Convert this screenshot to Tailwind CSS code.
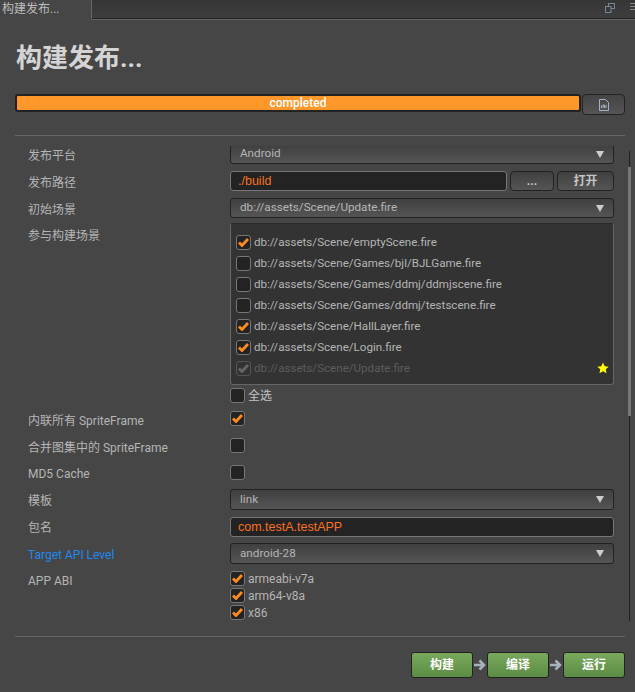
<!DOCTYPE html>
<html lang="zh">
<head>
    <meta charset="UTF-8">
    <title>构建发布...</title>
    <script src="https://cdn.jsdelivr.net/npm/@tailwindcss/browser@4"></script>
</head>
<body class="bg-[#464646] overflow-hidden font-['Roboto','Noto_Sans_CJK_SC',sans-serif] text-[12px] text-[#b5b5b5]">
    <div class="w-[635px] h-[692px] flex flex-col">
        <!-- Tab bar -->
        <div class="h-[19px] flex bg-[#3a3a3a]">
            <div class="w-[92px] h-[19px] pl-[2px] bg-[#464646] text-[12px] leading-[19px] text-[#bdbdbd] border-r border-[#666]">构建发布...</div>
            <div class="flex-1 flex justify-end items-start bg-gradient-to-b from-[#353535] to-[#3e3e3e] border-b border-[#222] relative">
                <div class="absolute left-0 right-0 bottom-[-2px] h-px bg-[#666]"></div>
                <svg class="w-[10px] h-[10px] mt-[3px] mr-[15px] text-[#76879b]" viewBox="0 0 10 10" fill="none" stroke="currentColor"><rect x="3.500" y="0.500" width="6" height="5"/><rect x="0.500" y="3.500" width="5.500" height="6" fill="#3a3a3a"/></svg>
                <svg class="w-[5px] h-[8px] mt-[3px] text-[#888]" viewBox="0 0 5 8" stroke="currentColor"><path d="M0 .5h5M0 3.500h5M0 6.500h5"/></svg>
            </div>
        </div>

        <!-- Header -->
        <div class="pl-[15px] pr-[10px] pt-[22px]">
            <h1 class="h-[34px] pl-[1px] text-[26px] leading-[34px] font-bold text-[#d4d4d4]">构建发布...</h1>
            <div class="mt-[19px] flex h-[21px] gap-[1px]">
                <div class="w-[566px] h-[18px] rounded-[3px] border-2 border-[#222] bg-[#ff972a] text-center text-[12px] leading-[14px] font-medium text-white">completed</div>
                <button class="w-[43px] h-[21px] rounded-[4px] border border-[#222] bg-gradient-to-b from-[#444] to-[#555] flex items-center justify-center">
                    <svg class="w-[10px] h-[12px] text-[#a3b2c9]" viewBox="0 0 10 12" fill="none" stroke="currentColor"><path d="M.5.5h6l3 3v8h-9zM2.500 9V6.500M4 9V6h1.500v3M7 6v3"/></svg>
                </button>
            </div>
            <div class="mt-[20px] h-px bg-[#666]"></div>
        </div>

        <!-- Form -->
        <div class="mt-[10px] h-[480px] relative overflow-hidden">
            <div class="absolute left-[629px] top-[5px] h-[470px] w-px bg-[#222]"></div>
            <div class="absolute left-[628px] top-[21px] h-[249px] w-[3px] bg-[#777]"></div>
            <div class="pl-[28px] -mt-[2px] flex flex-col">
                <div class="flex h-[27px]">
                    <label class="w-[202px] leading-[24px]">发布平台</label>
                    <div class="w-[384px] h-[20px] pl-[9px] pr-[9px] flex justify-between items-center rounded-[3px] border border-[#222] bg-gradient-to-b from-[#404040] to-[#555] text-[11.700px]">
                        <span>Android</span><span class="w-0 h-0 border-x-[4.500px] border-x-transparent border-t-[7px] border-t-[#ccc]"></span>
                    </div>
                </div>
                <div class="flex h-[27px]">
                    <label class="w-[202px] leading-[24px]">发布路径</label>
                    <input class="w-[277px] h-[20px] px-[7px] rounded-[3px] border border-[#777] bg-[#232323] font-['Liberation_Sans',sans-serif] text-[12.500px] text-[#f9701f]" value="./build">
                    <button class="ml-[3px] w-[44px] h-[20px] rounded-[4px] border border-[#222] bg-gradient-to-b from-[#404040] to-[#555] font-bold leading-[14px] text-[#c4c4c4]">...</button>
                    <button class="ml-[3px] w-[57px] h-[20px] rounded-[4px] border border-[#222] bg-gradient-to-b from-[#404040] to-[#555] font-bold leading-[16px] text-[#c4c4c4]">打开</button>
                </div>
                <div class="flex h-[25px]">
                    <label class="w-[202px] leading-[24px]">初始场景</label>
                    <div class="w-[384px] h-[20px] pl-[9px] pr-[9px] flex justify-between items-center rounded-[3px] border border-[#222] bg-gradient-to-b from-[#404040] to-[#555] text-[11.700px]">
                        <span>db://assets/Scene/Update.fire</span><span class="w-0 h-0 border-x-[4.500px] border-x-transparent border-t-[7px] border-t-[#ccc]"></span>
                    </div>
                </div>
                <div class="flex h-[165px]">
                    <label class="w-[202px] leading-[26px]">参与构建场景</label>
                    <div class="w-[384px] h-[162px] pt-[8px] pl-[5px] pr-[5px] rounded-[3px] border border-[#666] border-t-[#2a2a2a] bg-[#333] relative text-[11.600px]">
                        <div class="flex items-center gap-[3px] h-[21px]">
                            <span class="w-[15px] h-[15px] rounded-[3px] border border-[#777] bg-[#232323] flex items-center justify-center"><svg class="w-[11px] h-[9px]" viewBox="0 0 11 9" fill="none" stroke="#ff8a1f" stroke-width="2.800"><path d="M1 4.500l3 3L10 1"/></svg></span>
                            <span>db://assets/Scene/emptyScene.fire</span>
                        </div>
                        <div class="flex items-center gap-[3px] h-[21px]">
                            <span class="w-[15px] h-[15px] rounded-[3px] border border-[#777] bg-[#232323]"></span>
                            <span>db://assets/Scene/Games/bjl/BJLGame.fire</span>
                        </div>
                        <div class="flex items-center gap-[3px] h-[21px]">
                            <span class="w-[15px] h-[15px] rounded-[3px] border border-[#777] bg-[#232323]"></span>
                            <span>db://assets/Scene/Games/ddmj/ddmjscene.fire</span>
                        </div>
                        <div class="flex items-center gap-[3px] h-[21px]">
                            <span class="w-[15px] h-[15px] rounded-[3px] border border-[#777] bg-[#232323]"></span>
                            <span>db://assets/Scene/Games/ddmj/testscene.fire</span>
                        </div>
                        <div class="flex items-center gap-[3px] h-[21px]">
                            <span class="w-[15px] h-[15px] rounded-[3px] border border-[#777] bg-[#232323] flex items-center justify-center"><svg class="w-[11px] h-[9px]" viewBox="0 0 11 9" fill="none" stroke="#ff8a1f" stroke-width="2.800"><path d="M1 4.500l3 3L10 1"/></svg></span>
                            <span>db://assets/Scene/HallLayer.fire</span>
                        </div>
                        <div class="flex items-center gap-[3px] h-[21px]">
                            <span class="w-[15px] h-[15px] rounded-[3px] border border-[#777] bg-[#232323] flex items-center justify-center"><svg class="w-[11px] h-[9px]" viewBox="0 0 11 9" fill="none" stroke="#ff8a1f" stroke-width="2.800"><path d="M1 4.500l3 3L10 1"/></svg></span>
                            <span>db://assets/Scene/Login.fire</span>
                        </div>
                        <div class="flex items-center gap-[3px] h-[21px] text-[#5c5c5c]">
                            <span class="w-[15px] h-[15px] rounded-[3px] border border-[#555] bg-[#333] flex items-center justify-center"><svg class="w-[11px] h-[9px]" viewBox="0 0 11 9" fill="none" stroke="#666" stroke-width="2.800"><path d="M1 4.500l3 3L10 1"/></svg></span>
                            <span>db://assets/Scene/Update.fire</span>
                        </div>
                        <svg class="absolute right-[4px] bottom-[10px] w-[12px] h-[12px]" viewBox="0 0 24 24" fill="#ffff00"><path d="M12 1l3.400 7.300 7.900 1-5.800 5.400 1.500 7.800L12 18.700l-7 3.800 1.500-7.800L.7 9.300l7.900-1z"/></svg>
                    </div>
                </div>
                <div class="flex h-[23px] pl-[202px]">
                    <div class="flex items-start gap-[3px]">
                        <span class="w-[15px] h-[15px] rounded-[3px] border border-[#777] bg-[#232323]"></span>
                        <span class="leading-[17px] text-[#c4c4c4]">全选</span>
                    </div>
                </div>
                <div class="flex h-[27px]">
                    <label class="w-[202px] leading-[20px]">内联所有 SpriteFrame</label>
                    <span class="w-[15px] h-[15px] rounded-[3px] border border-[#777] bg-[#232323] flex items-center justify-center"><svg class="w-[11px] h-[9px]" viewBox="0 0 11 9" fill="none" stroke="#ff8a1f" stroke-width="2.800"><path d="M1 4.500l3 3L10 1"/></svg></span>
                </div>
                <div class="flex h-[27px]">
                    <label class="w-[202px] leading-[20px]">合并图集中的 SpriteFrame</label>
                    <span class="w-[15px] h-[15px] rounded-[3px] border border-[#777] bg-[#232323]"></span>
                </div>
                <div class="flex h-[24px]">
                    <label class="w-[202px] leading-[18px]">MD5 Cache</label>
                    <span class="w-[15px] h-[15px] rounded-[3px] border border-[#777] bg-[#232323]"></span>
                </div>
                <div class="flex h-[28px]">
                    <label class="w-[202px] leading-[24px]">模板</label>
                    <div class="w-[384px] h-[21px] pl-[9px] pr-[9px] flex justify-between items-center rounded-[3px] border border-[#222] bg-gradient-to-b from-[#404040] to-[#555] text-[11.700px]">
                        <span>link</span><span class="w-0 h-0 border-x-[4.500px] border-x-transparent border-t-[7px] border-t-[#ccc]"></span>
                    </div>
                </div>
                <div class="flex h-[26px]">
                    <label class="w-[202px] leading-[22px]">包名</label>
                    <input class="w-[384px] h-[20px] px-[7px] rounded-[3px] border border-[#777] bg-[#232323] font-['Liberation_Sans',sans-serif] text-[12.500px] text-[#f9701f]" value="com.testA.testAPP">
                </div>
                <div class="flex h-[28px]">
                    <label class="w-[202px] leading-[24px] text-[#1e88f0]">Target API Level</label>
                    <div class="w-[384px] h-[21px] pl-[9px] pr-[9px] flex justify-between items-center rounded-[3px] border border-[#222] bg-gradient-to-b from-[#404040] to-[#555] text-[11.700px]">
                        <span>android-28</span><span class="w-0 h-0 border-x-[4.500px] border-x-transparent border-t-[7px] border-t-[#ccc]"></span>
                    </div>
                </div>
                <div class="flex">
                    <label class="w-[202px] leading-[20px]">APP ABI</label>
                    <div class="flex flex-col gap-[2px]">
                        <div class="flex gap-[3px]">
                            <span class="w-[15px] h-[15px] rounded-[3px] border border-[#777] bg-[#232323] flex items-center justify-center"><svg class="w-[11px] h-[9px]" viewBox="0 0 11 9" fill="none" stroke="#ff8a1f" stroke-width="2.800"><path d="M1 4.500l3 3L10 1"/></svg></span>
                            <span class="leading-[16px] h-[15px]">armeabi-v7a</span>
                        </div>
                        <div class="flex gap-[3px]">
                            <span class="w-[15px] h-[15px] rounded-[3px] border border-[#777] bg-[#232323] flex items-center justify-center"><svg class="w-[11px] h-[9px]" viewBox="0 0 11 9" fill="none" stroke="#ff8a1f" stroke-width="2.800"><path d="M1 4.500l3 3L10 1"/></svg></span>
                            <span class="leading-[16px] h-[15px]">arm64-v8a</span>
                        </div>
                        <div class="flex gap-[3px]">
                            <span class="w-[15px] h-[15px] rounded-[3px] border border-[#777] bg-[#232323] flex items-center justify-center"><svg class="w-[11px] h-[9px]" viewBox="0 0 11 9" fill="none" stroke="#ff8a1f" stroke-width="2.800"><path d="M1 4.500l3 3L10 1"/></svg></span>
                            <span class="leading-[16px] h-[15px]">x86</span>
                        </div>
                    </div>
                </div>
            </div>
        </div>

        <!-- Footer -->
        <div class="pl-[15px] pr-[10px] mt-[10px]">
            <div class="h-px bg-[#666]"></div>
            <div class="mt-[15px] flex justify-end items-center">
                <button class="w-[62px] h-[26px] rounded-[3px] border border-[#222] bg-gradient-to-b from-[#78a95c] to-[#5c8c45] font-bold text-white">构建</button>
                <svg class="w-[12px] h-[12px] mx-[1px] text-[#a8b2bd]" viewBox="0 0 12 12" fill="none" stroke="currentColor" stroke-width="2.500"><path d="M0 6h9M5.500 1.500L10 6l-4.500 4.500"/></svg>
                <button class="w-[62px] h-[26px] rounded-[3px] border border-[#222] bg-gradient-to-b from-[#78a95c] to-[#5c8c45] font-bold text-white">编译</button>
                <svg class="w-[12px] h-[12px] mx-[1px] text-[#a8b2bd]" viewBox="0 0 12 12" fill="none" stroke="currentColor" stroke-width="2.500"><path d="M0 6h9M5.500 1.500L10 6l-4.500 4.500"/></svg>
                <button class="w-[62px] h-[26px] rounded-[3px] border border-[#222] bg-gradient-to-b from-[#78a95c] to-[#5c8c45] font-bold text-white">运行</button>
            </div>
        </div>
    </div>
</body>
</html>
